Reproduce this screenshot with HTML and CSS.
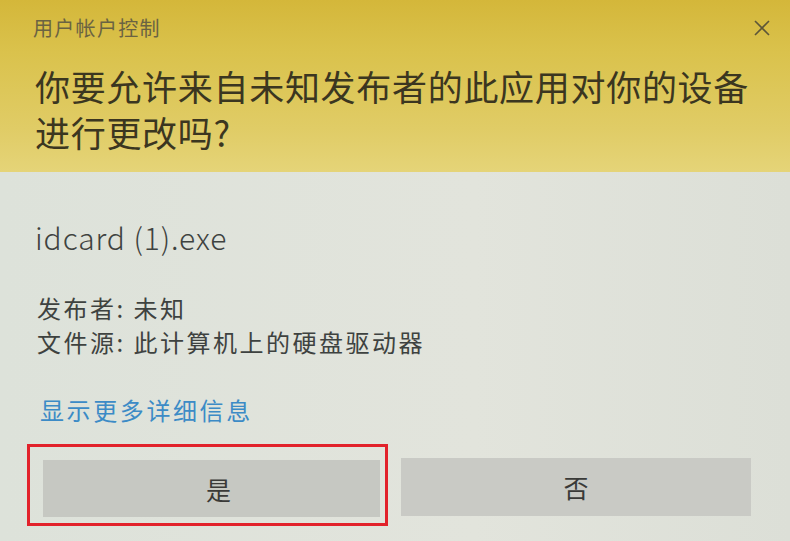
FILE: index.html
```html
<!DOCTYPE html>
<html lang="zh-CN">
<head>
    <meta charset="UTF-8">
    <meta name="viewport" content="width=device-width, initial-scale=1.0">
    <title>用户帐户控制</title>
    <link rel="stylesheet" href="styles.css">
</head>
<body>
    <div class="dialog">
        <header class="banner">
            <div class="titlebar">
                <span class="title">用户帐户控制</span>
                <span class="close">
                    <svg width="16" height="16" viewBox="0 0 16 16">
                        <path d="M1 1 L15 15 M15 1 L1 15" stroke="#5d5638" stroke-width="1.6" fill="none"/>
                    </svg>
                </span>
            </div>
            <h1 class="question">你要允许来自未知发布者的此应用对你的设备进行更改吗?</h1>
        </header>

        <div class="content">
            <p class="filename">idcard (1).exe</p>
            <div class="meta">
                <p>发布者: 未知</p>
                <p>文件源: 此计算机上的硬盘驱动器</p>
            </div>
            <a class="more" href="#">显示更多详细信息</a>
        </div>

        <div class="buttons">
            <div class="frame">
                <button class="btn btn-yes">是</button>
            </div>
            <button class="btn btn-no">否</button>
        </div>
    </div>
</body>
</html>
```

FILE: styles.css
```css
* {
    margin: 0;
    padding: 0;
    box-sizing: border-box;
}

body {
    font-family: "Noto Sans CJK SC", "Noto Sans", sans-serif;
    background-color: #dfe3db;
    color: #3a3d3b;
    width: 790px;
    height: 541px;
    overflow: hidden;
}

.dialog {
    height: 541px;
    background: linear-gradient(90deg, #dde2da 0%, #e2e4dc 60%, #dcdfd7 100%);
}

.banner {
    height: 172px;
    padding: 14px 20px 0 33px;
    background: linear-gradient(180deg, #d4b73a 0%, #dac24c 30%, #e0cc66 75%, #e5d478 100%);
}

.titlebar {
    display: flex;
    justify-content: space-between;
    align-items: center;
    height: 28px;
}

.title {
    font-size: 20px;
    line-height: 28px;
    color: #6a6342;
    letter-spacing: 1.3px;
}

.close {
    display: flex;
    align-items: center;
}

.question {
    margin-top: 21px;
    padding-left: 2px;
    font-size: 35px;
    font-weight: normal;
    line-height: 46px;
    color: #3b3620;
    letter-spacing: 0.7px;
}

.content {
    padding: 47px 0 0 35px;
}

.filename {
    font-size: 30px;
    font-weight: 300;
    line-height: 36px;
    color: #3e4240;
    letter-spacing: 0.9px;
}

.meta {
    margin-top: 36px;
    padding-left: 2px;
    font-size: 24px;
    line-height: 34px;
    color: #3e4240;
    letter-spacing: 2.5px;
}

.more {
    display: block;
    margin-top: 34px;
    padding-left: 5px;
    font-size: 24px;
    line-height: 34px;
    color: #3c8bc6;
    text-decoration: none;
    letter-spacing: 2.6px;
}

.buttons {
    display: flex;
    align-items: flex-start;
    margin-top: 17px;
    padding-left: 27px;
}

.frame {
    width: 361px;
    height: 82px;
    border: 3px solid #e2222b;
    padding: 13px 5px 5px 13px;
}

.btn {
    border: none;
    background-color: #c9cac5;
    color: #3a3a38;
    font-family: inherit;
    font-size: 25px;
    cursor: pointer;
}

.btn-yes {
    width: 337px;
    height: 57px;
    padding-left: 14px;
    background-color: #c6c8c2;
}

.btn-no {
    width: 350px;
    height: 58px;
    margin-left: 13px;
    margin-top: 14px;
}
```
